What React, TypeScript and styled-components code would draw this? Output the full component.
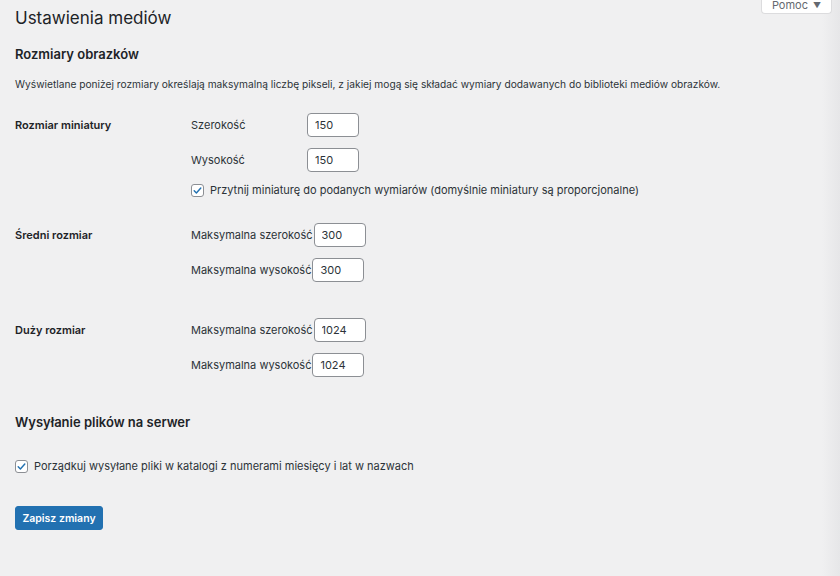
import React from "react";
import styled, { createGlobalStyle } from "styled-components";

const Global = createGlobalStyle`
  html, body { margin: 0; padding: 0; }
  body {
    width: 840px;
    height: 576px;
    overflow: hidden;
    background: linear-gradient(to right, #f0f0f1 0, #f0f0f1 822px, #e6e6e8 840px);
    font-family: Inter, "Noto Sans", "Liberation Sans", sans-serif;
    color: #1d2327;
  }
`;

const Wrap = styled.div`
  padding: 0 8px 0 15px;
`;

const Header = styled.div`
  display: flex;
  justify-content: space-between;
  align-items: flex-start;
`;

const Title = styled.h1`
  margin: 5px 0 0;
  font-size: 17px;
  font-weight: 400;
  line-height: 26px;
  color: #1d2327;
`;

const HelpTab = styled.button`
  margin-top: -11px;
  height: 25px;
  width: 71px;
  padding: 8px 0 0;
  background: #fff;
  border: 1px solid #dcdcde;
  border-top: none;
  border-radius: 0 0 4px 4px;
  font-family: inherit;
  font-size: 11px;
  color: #646970;
  line-height: 12px;
`;

const Caret = styled.span`
  font-size: 8px;
  margin-left: 5px;
  vertical-align: 1px;
`;

const SectionTitle = styled.h2<{ $top: number }>`
  margin: ${(p) => p.$top}px 0 0;
  font-size: 13px;
  font-weight: 600;
  line-height: 18px;
  color: #1d2327;
`;

const Desc = styled.p`
  margin: 13px 0 0;
  font-size: 10.2px;
  line-height: 16px;
  color: #2c3338;
`;

const Row = styled.div<{ $top: number }>`
  display: grid;
  grid-template-columns: 176px 1fr;
  margin-top: ${(p) => p.$top}px;
`;

const RowLabel = styled.div`
  font-size: 11px;
  font-weight: 600;
  line-height: 24px;
  color: #1d2327;
`;

const Fields = styled.div`
  display: flex;
  flex-direction: column;
  gap: 11px;
`;

const Field = styled.div`
  display: flex;
  align-items: center;
  height: 24px;
`;

const FieldLabel = styled.label`
  min-width: 115px;
  padding-right: 1px;
  font-size: 11px;
  color: #2c3338;
  white-space: nowrap;
`;

const NumInput = styled.input`
  box-sizing: border-box;
  width: 52px;
  height: 24px;
  padding: 0 7px;
  background: #fff;
  border: 1px solid #8c8f94;
  border-radius: 4px;
  font-family: inherit;
  font-size: 11px;
  color: #2c3338;
  outline: none;
`;

const CheckLine = styled.label<{ $top?: number }>`
  display: flex;
  align-items: center;
  gap: 6px;
  margin-top: ${(p) => p.$top ?? 0}px;
  font-size: 11px;
  color: #2c3338;
`;

const Box = styled.span`
  box-sizing: border-box;
  width: 13px;
  height: 13px;
  flex: none;
  background: #fff;
  border: 1px solid #8c8f94;
  border-radius: 3px;
  display: flex;
  align-items: center;
  justify-content: center;
`;

const SaveButton = styled.button`
  margin-top: 33px;
  height: 24px;
  width: 88px;
  padding: 0;
  background: #2271b1;
  border: 1px solid #2271b1;
  border-radius: 3px;
  color: #fff;
  font-family: inherit;
  font-size: 10.5px;
  font-weight: 600;
`;

const Check = () => (
  <Box>
    <svg width="11" height="11" viewBox="0 0 20 20">
      <path
        d="M4 10.5 L8 14.5 L16 5.5"
        fill="none"
        stroke="#2271b1"
        strokeWidth="2.6"
        strokeLinecap="round"
        strokeLinejoin="round"
      />
    </svg>
  </Box>
);

const SizeField = ({ label, value }: { label: string; value: string }) => (
  <Field>
    <FieldLabel>{label}</FieldLabel>
    <NumInput defaultValue={value} />
  </Field>
);

export default function App() {
  return (
    <>
      <Global />
      <Wrap>
        <Header>
          <Title>Ustawienia mediów</Title>
          <HelpTab>
            Pomoc<Caret>▼</Caret>
          </HelpTab>
        </Header>
        <SectionTitle $top={14}>Rozmiary obrazków</SectionTitle>
        <Desc>
          Wyświetlane poniżej rozmiary określają maksymalną liczbę pikseli, z jakiej mogą się składać wymiary dodawanych do biblioteki mediów obrazków.
        </Desc>
        <Row $top={21}>
          <RowLabel>Rozmiar miniatury</RowLabel>
          <Fields>
            <SizeField label="Szerokość" value="150" />
            <SizeField label="Wysokość" value="150" />
            <CheckLine $top={0}>
              <Check />
              Przytnij miniaturę do podanych wymiarów (domyślnie miniatury są proporcjonalne)
            </CheckLine>
          </Fields>
        </Row>
        <Row $top={26}>
          <RowLabel>Średni rozmiar</RowLabel>
          <Fields>
            <SizeField label="Maksymalna szerokość" value="300" />
            <SizeField label="Maksymalna wysokość" value="300" />
          </Fields>
        </Row>
        <Row $top={36}>
          <RowLabel>Duży rozmiar</RowLabel>
          <Fields>
            <SizeField label="Maksymalna szerokość" value="1024" />
            <SizeField label="Maksymalna wysokość" value="1024" />
          </Fields>
        </Row>
        <SectionTitle $top={36}>Wysyłanie plików na serwer</SectionTitle>
        <CheckLine $top={28}>
          <Check />
          Porządkuj wysyłane pliki w katalogi z numerami miesięcy i lat w nazwach
        </CheckLine>
        <SaveButton>Zapisz zmiany</SaveButton>
      </Wrap>
    </>
  );
}
